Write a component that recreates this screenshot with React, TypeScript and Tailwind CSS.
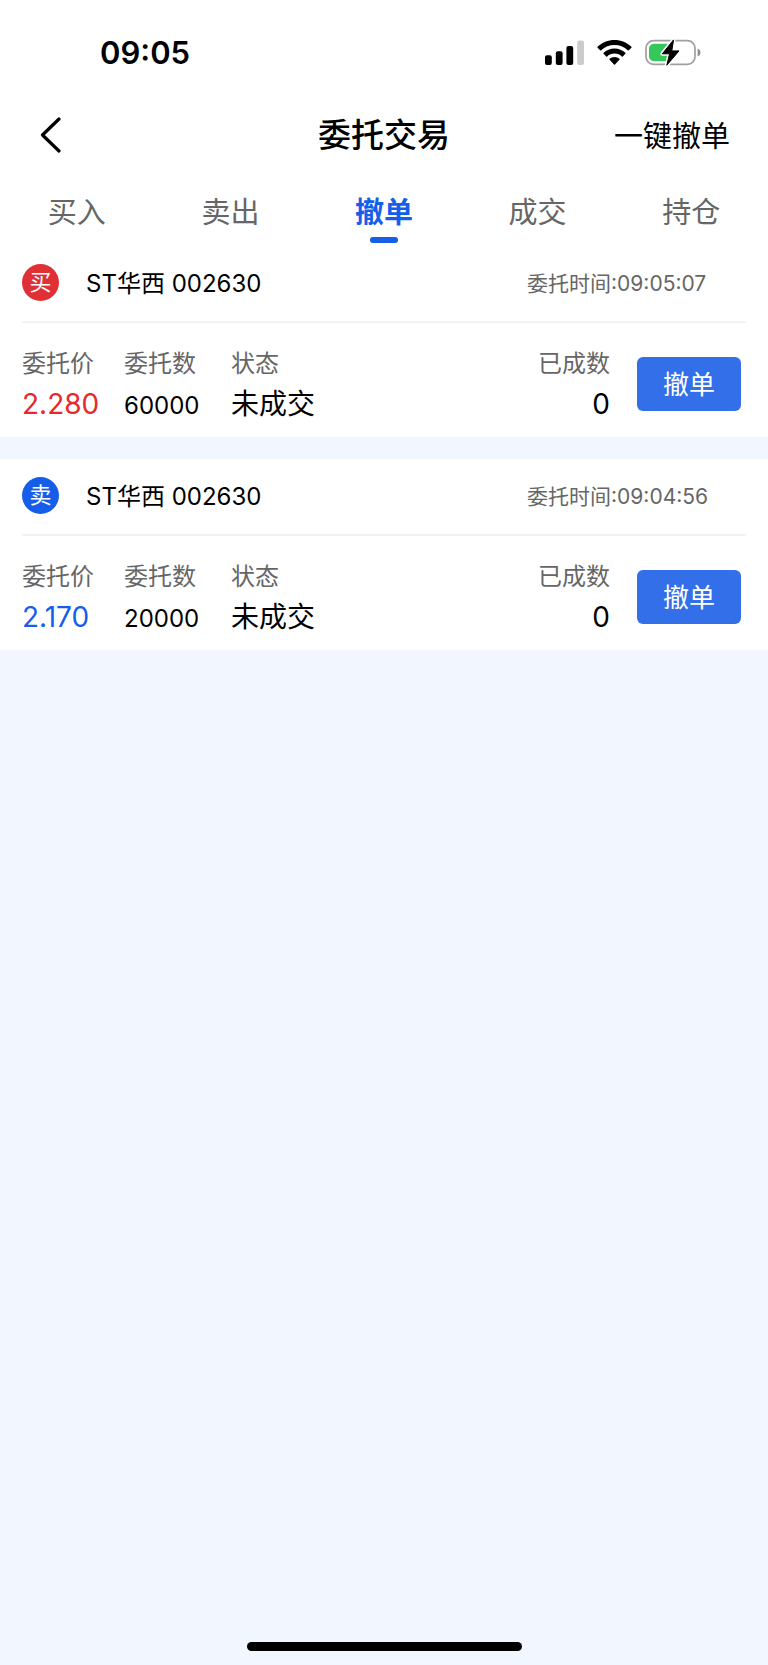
type Order = {
  id: number;
  side: "buy" | "sell";
  name: string;
  code: string;
  time: string;
  price: string;
  amount: string;
  status: string;
  filled: string;
};

const TABS = ["买入", "卖出", "撤单", "成交", "持仓"];
const ACTIVE_TAB = "撤单";

const ORDERS: Order[] = [
  {
    id: 1,
    side: "buy",
    name: "ST华西",
    code: "002630",
    time: "09:05:07",
    price: "2.280",
    amount: "60000",
    status: "未成交",
    filled: "0",
  },
  {
    id: 2,
    side: "sell",
    name: "ST华西",
    code: "002630",
    time: "09:04:56",
    price: "2.170",
    amount: "20000",
    status: "未成交",
    filled: "0",
  },
];

function SignalIcon() {
  return (
    <svg width="39" height="27" viewBox="0 0 39 27" aria-hidden="true">
      <rect x="0" y="16.3" width="6.8" height="9.7" rx="2" />
      <rect x="10.8" y="12.3" width="6.8" height="13.7" rx="2" />
      <rect x="21.4" y="7" width="6.8" height="19" rx="2" />
      <rect x="32.2" y="1.6" width="6.8" height="24.4" rx="2" fill="#cbcbcb" />
    </svg>
  );
}

function WifiIcon() {
  return (
    <svg width="35" height="27" viewBox="0 0 35 27" aria-hidden="true">
      <path d="M17.5 1C11 1 5 3.5.6 7.7a.7.7 0 0 0 0 1l2.6 2.6a.7.7 0 0 0 1 0C7.8 7.9 12.5 6 17.5 6s9.7 1.9 13.3 5.3a.7.7 0 0 0 1 0l2.6-2.6a.7.7 0 0 0 0-1C30 3.5 24 1 17.5 1Z" />
      <path d="M17.5 9.5c-4.2 0-8 1.6-10.9 4.3a.7.7 0 0 0 0 1l2.6 2.6a.7.7 0 0 0 1 0c2-1.8 4.5-2.8 7.3-2.8s5.3 1 7.3 2.8a.7.7 0 0 0 1 0l2.6-2.6a.7.7 0 0 0 0-1c-2.9-2.7-6.7-4.3-10.9-4.3Z" />
      <path d="M17.5 18c-1.9 0-3.6.7-4.9 1.8a.7.7 0 0 0 0 1l4.4 4.6a.7.7 0 0 0 1 0l4.4-4.6a.7.7 0 0 0 0-1c-1.3-1.1-3-1.8-4.9-1.8Z" />
    </svg>
  );
}

function BatteryIcon() {
  const bolt = "M28.5.9 17.3 14.8h7.3L21.8 26.2 34 11.9h-7.2Z";
  return (
    <svg width="56" height="27" viewBox="0 0 56 27" aria-hidden="true">
      <rect x="1" y="1.6" width="49" height="23.8" rx="7.6" fill="none" stroke="#a0a0a0" strokeWidth="1.7" />
      <path d="M52.6 9.5c1.8.7 2.9 2.2 2.9 4s-1.1 3.3-2.9 4Z" fill="#8e8e8e" />
      <path d="M9 4.8h15v17.4H9a5 5 0 0 1-5-5V9.8a5 5 0 0 1 5-5Z" fill="#34c759" />
      <path d={bolt} fill="#fff" stroke="#fff" strokeWidth="4" strokeLinejoin="round" />
      <path d={bolt} stroke="#000" strokeWidth="1" strokeLinejoin="round" />
    </svg>
  );
}

function StatusBar() {
  return (
    <div className="flex h-[105px] items-center justify-between pl-[100px] pr-[67px]">
      <span className="text-[31px] leading-10 font-semibold">09:05</span>
      <div className="flex items-center gap-[13px]">
        <SignalIcon />
        <WifiIcon />
        <BatteryIcon />
      </div>
    </div>
  );
}

function Header() {
  return (
    <header className="grid h-15 grid-cols-[1fr_auto_1fr] items-center px-[38px]">
      <button type="button" aria-label="返回" className="justify-self-start">
        <svg width="24" height="36" viewBox="0 0 24 36" fill="none" aria-hidden="true">
          <path d="M21 2 4.5 18 21 34" stroke="#000" strokeWidth="3.2" strokeLinecap="round" strokeLinejoin="round" />
        </svg>
      </button>
      <h1 className="text-[33px] leading-10 font-medium">委托交易</h1>
      <button type="button" className="justify-self-end pt-1 text-[29px] leading-10">
        一键撤单
      </button>
    </header>
  );
}

function Tabs() {
  return (
    <nav className="grid h-[81px] grid-cols-5 pt-7 text-[29px] leading-10">
      {TABS.map((tab) =>
        tab === ACTIVE_TAB ? (
          <a key={tab} href="#" aria-current="page" className="flex flex-col items-center gap-1 font-bold text-[#165eea]">
            {tab}
            <span className="h-1.5 w-7 rounded-full bg-[#165eea]" />
          </a>
        ) : (
          <a key={tab} href="#" className="text-center text-[#666]">
            {tab}
          </a>
        )
      )}
    </nav>
  );
}

function OrderCard({ order }: { order: Order }) {
  const buy = order.side === "buy";
  return (
    <article className="bg-white">
      <div className="mx-[22px] flex h-[77px] items-center border-b-2 border-[#f2f2f2]">
        <span
          className={`mb-0.5 flex size-[37px] items-center justify-center rounded-full text-[22px] text-white ${
            buy ? "bg-[#e03036]" : "bg-[#165eea]"
          }`}
        >
          {buy ? "买" : "卖"}
        </span>
        <h2 className="ml-[27px] flex-1 text-2xl">
          {order.name} {order.code}
        </h2>
        <span className="w-[219px] text-[21px] text-[#666]">委托时间:{order.time}</span>
      </div>
      <div className="flex items-center pt-[21px] pr-[27px] pb-[13px] pl-[22px]">
        <dl className="flex flex-1 text-[28px] leading-9">
          <div className="w-[102px]">
            <dt className="text-2xl/10 text-[#666]">委托价</dt>
            <dd className={`mt-0.5 ${buy ? "text-[#e8282e]" : "text-[#165eea]"}`}>{order.price}</dd>
          </div>
          <div className="w-[107px]">
            <dt className="text-2xl/10 text-[#666]">委托数</dt>
            <dd className="mt-1 text-2xl/9">{order.amount}</dd>
          </div>
          <div className="flex-1">
            <dt className="text-2xl/10 text-[#666]">状态</dt>
            <dd className="mt-0.5">{order.status}</dd>
          </div>
          <div className="text-right">
            <dt className="text-2xl/10 text-[#666]">已成数</dt>
            <dd className="mt-0.5">{order.filled}</dd>
          </div>
        </dl>
        <button type="button" className="ml-[27px] h-[54px] w-[104px] rounded-md bg-[#326fe8] text-[26px] text-white">
          撤单
        </button>
      </div>
    </article>
  );
}

export default function App() {
  return (
    <div className="flex min-h-screen flex-col bg-[#f2f6ff] font-['Inter','Noto_Sans_CJK_SC',sans-serif] text-black">
      <div className="bg-white">
        <StatusBar />
        <Header />
        <Tabs />
      </div>
      <main className="flex flex-col gap-[22px]">
        {ORDERS.map((order) => (
          <OrderCard key={order.id} order={order} />
        ))}
      </main>
      <div className="mx-auto mt-auto mb-3.5 h-[9px] w-[275px] rounded-full bg-black" />
    </div>
  );
}
